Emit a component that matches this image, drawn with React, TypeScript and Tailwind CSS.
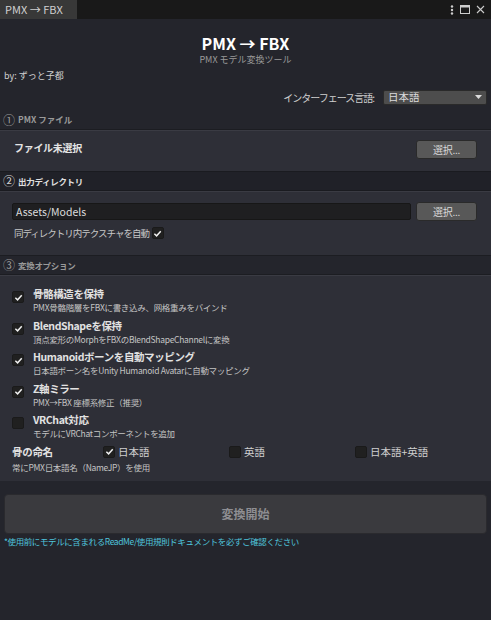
import React from "react";

const F = { fontFamily: '"Noto Sans CJK JP", "Noto Sans", sans-serif' };

function Check({ on }: { on: boolean }) {
  return (
    <div className="w-[12px] h-[12px] rounded-[2px] bg-[#202020] border border-[#1a1a1a] flex items-center justify-center shrink-0">
      {on && (
        <svg width="9" height="9" viewBox="0 0 10 10">
          <path d="M1.5 5.2 L4 7.6 L8.6 2.4" fill="none" stroke="#f0f0f0" strokeWidth="1.6" />
        </svg>
      )}
    </div>
  );
}

function Btn({ children }: { children: React.ReactNode }) {
  return (
    <div className="w-[61px] h-[19px] rounded-[3px] bg-[#585858] border border-[#2a2a2a] flex items-center justify-center text-[10px] text-[#d8d8d8] tracking-[-0.3px]">
      {children}
    </div>
  );
}

function Opt({ on, title, desc }: { on: boolean; title: string; desc: string }) {
  return (
    <div className="flex items-start gap-[9px] pl-[12px] h-[31.5px]">
      <div className="mt-[5px]"><Check on={on} /></div>
      <div className="flex flex-col">
        <div className="text-[10.5px] font-bold text-[#e2e2e2] leading-[15px] tracking-[-0.4px]">{title}</div>
        <div className="text-[8.5px] text-[#c4c4c4] leading-[12px] tracking-[-0.3px]">{desc}</div>
      </div>
    </div>
  );
}

export default function App() {
  return (
    <div style={F} className="w-[491px] h-[620px] bg-[#24252c] text-[#d0d0d0] flex flex-col overflow-hidden">
      {/* top bar */}
      <div className="h-[19px] bg-[#191919] flex items-stretch justify-between">
        <div className="w-[77px] bg-[#383838] text-[11px] text-[#d0d0d0] pl-[5px] flex items-center leading-none">PMX → FBX</div>
        <div className="flex items-center gap-[6px] pr-[6px] text-[#c8c8c8]">
          <svg width="4" height="10" viewBox="0 0 4 10"><circle cx="2" cy="1.5" r="1.2" fill="#ccc" /><circle cx="2" cy="5" r="1.2" fill="#ccc" /><circle cx="2" cy="8.5" r="1.2" fill="#ccc" /></svg>
          <svg width="10" height="9" viewBox="0 0 10 9"><rect x="0.5" y="0.5" width="9" height="8" fill="none" stroke="#ccc" /><rect x="0.5" y="0.5" width="9" height="2" fill="#ccc" /></svg>
          <svg width="9" height="9" viewBox="0 0 9 9"><path d="M1 1 L8 8 M8 1 L1 8" stroke="#ccc" strokeWidth="1.1" /></svg>
        </div>
      </div>

      {/* title */}
      <div className="flex flex-col items-center mt-[14px]">
        <div className="text-[16px] font-bold text-white leading-[20px]">PMX → FBX</div>
        <div className="text-[9px] text-[#9a9a9a] leading-[12px] mt-[1px]">PMX モデル変換ツール</div>
      </div>
      <div className="text-[9px] text-[#d0d0d0] pl-[4px] mt-[4px] leading-[12px]">by: ずっと子都</div>

      <div className="flex items-center justify-end pr-[4px] mt-[8px] gap-[9px]">
        <div className="text-[10px] text-[#d0d0d0] tracking-[-1px]">インターフェース言語:</div>
        <div className="w-[104px] h-[15px] rounded-[2px] bg-[#4d4d4d] border border-[#2a2a2a] flex items-center justify-between px-[4px]">
          <span className="text-[10.5px] text-[#dcdcdc] leading-none">日本語</span>
          <svg width="7" height="5" viewBox="0 0 7 5"><path d="M0 0 L7 0 L3.5 4 Z" fill="#ddd" /></svg>
        </div>
      </div>

      {/* section 1 */}
      <div className="mt-[5px] h-[20px] flex items-center pl-[3px] gap-[3px] border-b border-[#1c1d22]">
        <span className="text-[12px] text-[#9a9a9a] leading-none">①</span>
        <span className="text-[8.5px] font-bold text-[#9a9a9a]">PMX ファイル</span>
      </div>
      <div className="h-[41px] bg-[#2e2f37] border-t border-[#3a3b43] flex items-start justify-between pl-[14px] pr-[14px] pt-[9px]">
        <span className="text-[10px] font-bold text-[#e4e4e4] leading-[16px] tracking-[-0.3px]">ファイル未選択</span>
        <Btn>選択...</Btn>
      </div>

      {/* section 2 */}
      <div className="h-[20px] bg-[#202128] flex items-center pl-[3px] gap-[3px] border-y border-[#1a1b20]">
        <span className="text-[12px] text-[#d0d0d0] leading-none">②</span>
        <span className="text-[8.5px] font-bold text-[#e0e0e0] tracking-[-0.3px]">出力ディレクトリ</span>
      </div>
      <div className="h-[64px] bg-[#2e2f37] border-t border-[#3a3b43] flex flex-col pl-[12px] pr-[14px] pt-[10px]">
        <div className="flex items-center gap-[5px]">
          <div className="flex-1 h-[17px] rounded-[2px] bg-[#1f1f21] border border-[#171717] flex items-center pl-[3px] text-[10.5px] text-[#dcdcdc]">Assets/Models</div>
          <Btn>選択...</Btn>
        </div>
        <div className="flex items-center gap-[3px] mt-[5px] pl-[2px]">
          <span className="text-[9.5px] text-[#c8c8c8] tracking-[-1px]">同ディレクトリ内テクスチャを自動</span>
          <Check on={true} />
        </div>
      </div>

      {/* section 3 */}
      <div className="h-[20px] flex items-center pl-[3px] gap-[3px] border-y border-[#1c1d22]">
        <span className="text-[12px] text-[#9a9a9a] leading-none">③</span>
        <span className="text-[8.5px] font-bold text-[#9a9a9a] tracking-[-0.3px]">変換オプション</span>
      </div>
      <div className="h-[206px] bg-[#2e2f37] border-t border-[#3a3b43] flex flex-col pt-[10px]">
        <Opt on={true} title="骨骼構造を保持" desc="PMX骨骼階層をFBXに書き込み、网格重みをバインド" />
        <Opt on={true} title="BlendShapeを保持" desc="頂点変形のMorphをFBXのBlendShapeChannelに変換" />
        <Opt on={true} title="Humanoidボーンを自動マッピング" desc="日本語ボーン名をUnity Humanoid Avatarに自動マッピング" />
        <Opt on={true} title="Z軸ミラー" desc="PMX→FBX 座標系修正（推奨）" />
        <Opt on={false} title="VRChat対応" desc="モデルにVRChatコンポーネントを追加" />
        <div className="flex items-center h-[16px] pl-[12px]">
          <span className="w-[91px] text-[10.5px] font-bold text-[#e2e2e2] tracking-[-0.3px]">骨の命名</span>
          <div className="w-[126px] flex items-center gap-[3px]"><Check on={true} /><span className="text-[10.5px] text-[#d0d0d0]">日本語</span></div>
          <div className="w-[126px] flex items-center gap-[3px]"><Check on={false} /><span className="text-[10.5px] text-[#d0d0d0]">英語</span></div>
          <div className="flex items-center gap-[3px]"><Check on={false} /><span className="text-[10.5px] text-[#d0d0d0]">日本語+英語</span></div>
        </div>
        <div className="pl-[12px] text-[8.5px] text-[#c4c4c4] leading-[12px] mt-[1px] tracking-[-0.3px]">常にPMX日本語名（NameJP）を使用</div>
      </div>

      {/* convert */}
      <div className="mx-[4px] mt-[13px] h-[40px] rounded-[4px] bg-[#3a3a3e] border border-[#2a2a2e] flex items-center justify-center">
        <span className="text-[12px] font-bold text-[#8e8e92]">変換開始</span>
      </div>
      <div className="pl-[4px] mt-[1px] text-[8.5px] text-[#4fc4dc] leading-[12px] tracking-[-0.4px]">*使用前にモデルに含まれるReadMe/使用規則ドキュメントを必ずご確認ください</div>
    </div>
  );
}
